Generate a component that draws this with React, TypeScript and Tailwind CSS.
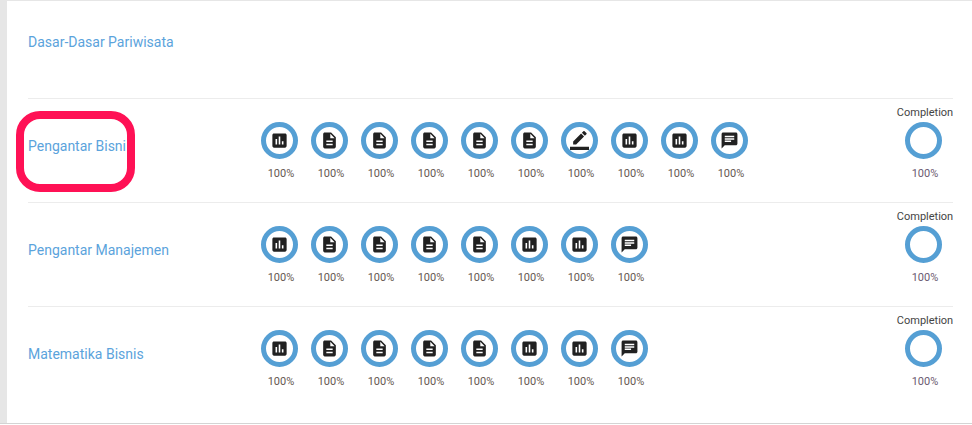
const paths = {
  chart: 'M19 3H5c-1.1 0-2 .9-2 2v14c0 1.1.9 2 2 2h14c1.1 0 2-.9 2-2V5c0-1.1-.9-2-2-2zM9 17H7v-7h2v7zm4 0h-2V7h2v10zm4 0h-2v-4h2v4z',
  doc: 'M14 2H6c-1.1 0-1.99.9-1.99 2L4 20c0 1.1.89 2 1.99 2H18c1.1 0 2-.9 2-2V8l-6-6zm2 16H8v-2h8v2zm0-4H8v-2h8v2zm-3-5V3.5L18.5 9H13z',
  pen: 'M17.75 7L14 3.25l-10 10V17h3.75l10-10zm2.96-2.96c.39-.39.39-1.02 0-1.41L18.37.29c-.39-.39-1.02-.39-1.41 0L15 2.25 18.75 6l1.96-1.96zM0 20h24v4H0z',
  chat: 'M20 2H4c-1.1 0-1.99.9-1.99 2L2 22l4-4h14c1.1 0 2-.9 2-2V4c0-1.1-.9-2-2-2zM6 9h12v2H6V9zm8 5H6v-2h8v2zm4-6H6V6h12v2z',
}

type IconName = keyof typeof paths

const courses: { name: string; items: IconName[] }[] = [
  { name: 'Pengantar Bisni', items: ['chart', 'doc', 'doc', 'doc', 'doc', 'doc', 'pen', 'chart', 'chart', 'chat'] },
  { name: 'Pengantar Manajemen', items: ['chart', 'doc', 'doc', 'doc', 'doc', 'chart', 'chart', 'chat'] },
  { name: 'Matematika Bisnis', items: ['chart', 'doc', 'doc', 'doc', 'doc', 'chart', 'chart', 'chat'] },
]

function Activity({ icon }: { icon: IconName }) {
  return (
    <div className="flex w-[50px] flex-col items-center">
      <div className="ml-[5px] flex h-[37px] w-[37px] items-center justify-center self-start rounded-full border-[5px] border-[#559fd4] bg-white">
        <svg viewBox="0 0 24 24" className="h-[19px] w-[19px] fill-[#212121]">
          <path d={paths[icon]} />
        </svg>
      </div>
      <span className="mt-[8px] text-[11px] leading-[14px] text-[#665850]">100%</span>
    </div>
  )
}

function Completion() {
  return (
    <div className="flex w-[56px] flex-col items-center pt-[7px]">
      <span className="whitespace-nowrap text-[11px] leading-[13px] text-[#444]">Completion</span>
      <div className="ml-[8px] mt-[3px] h-[37px] w-[37px] self-start rounded-full border-[5px] border-[#559fd4]" />
      <span className="mt-[8px] text-[11px] leading-[14px] text-[#6b5a70]">100%</span>
    </div>
  )
}

export default function App() {
  return (
    <div className="relative h-[425px] w-[972px] overflow-hidden bg-white font-['Roboto',sans-serif]">
      <div className="flex h-[424px] border-b border-b-[#d4d4d4]">
        <div className="w-[7px] shrink-0 bg-[#e6e6e6]" />
        <div className="flex-1 border-t border-t-[#e6e6e6] pl-[21px] pr-[19px]">
          <div className="flex h-[97px] items-center pb-[14px] text-[14px] text-[#5ba3dc]">Dasar-Dasar Pariwisata</div>
          {courses.map((course) => (
            <div key={course.name} className="flex h-[104px] border-t border-t-[#ececec]">
              <div className="flex w-[228px] shrink-0 items-center pb-[8px] text-[14px] text-[#5ba3dc]">{course.name}</div>
              <div className="flex flex-1 pt-[23px]">
                {course.items.map((icon, i) => (
                  <Activity key={i} icon={icon} />
                ))}
              </div>
              <Completion />
            </div>
          ))}
        </div>
      </div>
      {/* marker drawn over the screenshot */}
      <div className="absolute left-[16px] top-[111px] h-[81px] w-[119px] rounded-[24px] border-[8px] border-[#ff1155]" />
    </div>
  )
}
